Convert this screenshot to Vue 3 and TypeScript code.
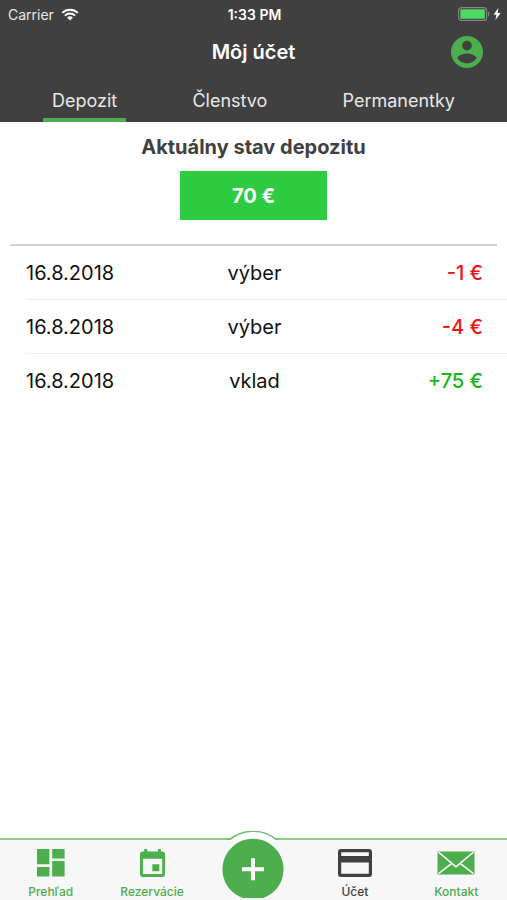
<script setup lang="ts">
import { ref } from 'vue'

interface Transaction {
  date: string
  kind: string
  amount: number
}

const tabs: string[] = ['Depozit', 'Členstvo', 'Permanentky']
const activeTab = ref<string>('Depozit')

const balance = 70
const transactions: Transaction[] = [
  { date: '16.8.2018', kind: 'výber', amount: -1 },
  { date: '16.8.2018', kind: 'výber', amount: -4 },
  { date: '16.8.2018', kind: 'vklad', amount: 75 },
]

const formatAmount = (n: number): string => `${n > 0 ? '+' : ''}${n} €`
</script>

<template>
  <div class="screen">
    <header class="top">
      <div class="status">
        <div class="carrier">
          <span>Carrier</span>
          <svg class="wifi" viewBox="0 0 18 13" aria-hidden="true">
            <path d="M1.200 4.900a11.200 11.200 0 0 1 15.600 0" />
            <path d="M3.900 7.600a7.300 7.300 0 0 1 10.200 0" />
            <path class="dot" d="M9 12.600 6.100 9.700a4.100 4.100 0 0 1 5.800 0z" />
          </svg>
        </div>
        <span class="clock">1:33 PM</span>
        <div class="power">
          <svg class="battery" viewBox="0 0 32 14" aria-hidden="true">
            <rect x="0.6" y="0.6" width="28" height="12.8" rx="3" fill="none" stroke="#858585" stroke-width="1.2" />
            <rect x="2.3" y="2.3" width="24.6" height="9.4" rx="1.2" fill="#4cd964" />
            <path d="M30 4.600c1.900.8 1.900 4 0 4.800z" fill="#858585" />
          </svg>
          <svg class="bolt" viewBox="0 0 8 12" aria-hidden="true">
            <path d="M5.400 0 .4 6.700h3L2.400 12l5.300-7H4.600z" fill="#fff" />
          </svg>
        </div>
      </div>

      <div class="title-bar">
        <h1>Môj účet</h1>
        <button class="profile" type="button" aria-label="Profil">
          <svg viewBox="2 2 20 20" aria-hidden="true">
            <path d="M12 2C6.480 2 2 6.480 2 12s4.480 10 10 10 10-4.480 10-10S17.520 2 12 2zm0 3c1.660 0 3 1.340 3 3s-1.340 3-3 3-3-1.340-3-3 1.340-3 3-3zm0 14.200c-2.500 0-4.710-1.280-6-3.220.03-1.990 4-3.080 6-3.080 1.990 0 5.970 1.090 6 3.080-1.290 1.940-3.500 3.220-6 3.220z" fill="#4cae4c" />
          </svg>
        </button>
      </div>

      <div class="tabs" role="tablist">
        <button
          v-for="tab in tabs"
          :key="tab"
          type="button"
          role="tab"
          class="tab"
          :class="{ active: tab === activeTab }"
          :aria-selected="tab === activeTab"
          @click="activeTab = tab"
        >{{ tab }}</button>
      </div>
    </header>

    <main>
      <section class="summary">
        <h2>Aktuálny stav depozitu</h2>
        <div class="balance">{{ balance }} €</div>
      </section>

      <table class="history">
        <tbody>
          <tr v-for="(t, i) in transactions" :key="i">
            <td class="date">{{ t.date }}</td>
            <td class="kind">{{ t.kind }}</td>
            <td class="amount" :class="t.amount < 0 ? 'minus' : 'plus'">{{ formatAmount(t.amount) }}</td>
          </tr>
        </tbody>
      </table>
    </main>

    <nav class="bottom">
      <a href="#prehlad" class="item">
        <svg viewBox="0 0 28 28" aria-hidden="true">
          <path d="M0 0h12.400v15.200H0zM15.200 0h12.400v9.400H15.200zM15.200 12h12.400v15.400H15.200zM0 18h12.400v9.400H0z" />
        </svg>
        <span>Prehľad</span>
      </a>
      <a href="#rezervacie" class="item">
        <svg viewBox="0 0 26 29" aria-hidden="true">
          <path fill-rule="evenodd" d="M4.400 0h3v2.600h11.200V0h3v2.600H23a3 3 0 0 1 3 3V26a3 3 0 0 1-3 3H3a3 3 0 0 1-3-3V5.600a3 3 0 0 1 3-3h1.400zM3 10v16h20V10zM12.800 15.800H20V23h-7.200z" />
        </svg>
        <span>Rezervácie</span>
      </a>
      <a href="#pridat" class="add" aria-label="Pridať">
        <svg viewBox="0 0 76 69" aria-hidden="true">
          <path d="M15 8.300A37 37 0 0 1 61 8.300V10H15z" fill="#fff" />
          <path d="M12 8.300h3A37 37 0 0 1 61 8.300h3" fill="none" stroke="#6fbe6f" stroke-width="1.500" />
          <path d="M27.700 67a30.500 30.500 0 1 1 20.600 0z" fill="#4cae4c" />
          <path d="M38 27.300v22M27 38.300h22" stroke="#fff" stroke-width="4" />
        </svg>
      </a>
      <a href="#ucet" class="item current" aria-current="page">
        <svg viewBox="0 0 34 28" aria-hidden="true">
          <path fill-rule="evenodd" d="M3 0h28a3 3 0 0 1 3 3v22a3 3 0 0 1-3 3H3a3 3 0 0 1-3-3V3a3 3 0 0 1 3-3zM3.200 3.200V7h27.600V3.200zM3.200 13.600v11.200h27.600V13.600z" />
        </svg>
        <span>Účet</span>
      </a>
      <a href="#kontakt" class="item">
        <svg viewBox="0 -2 38 28" aria-hidden="true">
          <path d="M.5.5h37v23H.5z" />
          <path d="M1.500 1.200 17 14.200l2 1.600 2-1.600L36.500 1.200M1.500 22.600 14.800 12.400M36.500 22.600 23.200 12.400" fill="none" stroke="#f7f7f7" stroke-width="1.700" />
        </svg>
        <span>Kontakt</span>
      </a>
    </nav>
  </div>
</template>

<style>
body {
  margin: 0;
  background: #fff;
}
</style>

<style scoped>
.screen {
  display: flex;
  flex-direction: column;
  min-height: 100vh;
  font-family: Inter, "Liberation Sans", sans-serif;
  color: #111;
}

button {
  margin: 0;
  border: 0;
  background: none;
  font: inherit;
  color: inherit;
  cursor: pointer;
}

.top {
  background: #404040;
  color: #fff;
}

.status {
  display: grid;
  grid-template-columns: 1fr auto 1fr;
  align-items: center;
  height: 28px;
  padding: 0 6px 0 8px;
  font-size: 14px;
}

.carrier {
  display: flex;
  align-items: center;
  gap: 7px;
  color: #e8e8e8;
}

.wifi {
  width: 18px;
  height: 13px;
  fill: none;
  stroke: #fff;
  stroke-width: 2;
}

.wifi .dot {
  fill: #fff;
  stroke: none;
}

.clock {
  font-weight: 600;
}

.power {
  display: flex;
  justify-content: flex-end;
  align-items: center;
  gap: 3px;
}

.battery {
  width: 32px;
  height: 14px;
}

.bolt {
  width: 8px;
  height: 12px;
}

.title-bar {
  display: grid;
  grid-template-columns: 1fr auto 1fr;
  align-items: center;
  height: 48px;
  padding: 0 24px;
}

h1 {
  grid-column: 2;
  margin: 0;
  font-size: 20px;
  line-height: 24px;
  font-weight: 600;
}

.profile {
  justify-self: end;
  padding: 0;
  width: 32px;
  height: 32px;
}

.profile svg {
  display: block;
  width: 32px;
  height: 32px;
}

.tabs {
  display: flex;
  justify-content: space-between;
  padding: 4px 43px 0;
}

.tab {
  padding: 8px 9px 4px;
  height: 42px;
  border-bottom: 4px solid transparent;
  font-size: 18px;
  line-height: 26px;
  color: #e8e8e8;
}

.tab.active {
  border-bottom-color: #4cae4c;
}

main {
  flex: 1;
}

.summary {
  display: flex;
  flex-direction: column;
  align-items: center;
  gap: 12px;
  margin: 0 10px;
  padding: 13px 0 24px;
  border-bottom: 2px solid #d2d2d2;
}

h2 {
  margin: 0;
  font-size: 20px;
  line-height: 24px;
  font-weight: 700;
  color: #404040;
}

.balance {
  box-sizing: border-box;
  min-width: 147px;
  padding: 13px 16px 12px;
  background: #2ecc40;
  color: #fff;
  font-size: 20px;
  line-height: 24px;
  font-weight: 700;
  text-align: center;
}

.history {
  width: calc(100% - 26px);
  margin-left: 26px;
  border-spacing: 0;
  table-layout: fixed;
}

.history td {
  height: 53px;
  padding: 0;
  font-size: 20px;
  line-height: 24px;
}

.history tr + tr td {
  border-top: 1px solid #ececec;
}

.date {
  width: 31%;
}

.kind {
  width: 33%;
  text-align: center;
}

.history .amount {
  padding-right: 24px;
  text-align: right;
  font-weight: 500;
}

.minus {
  color: #f01414;
}

.plus {
  color: #14b914;
}

.bottom {
  display: grid;
  grid-template-columns: repeat(5, 1fr);
  height: 60px;
  border-top: 2px solid #8fce8f;
  background: #f7f7f7;
}

.item {
  display: flex;
  flex-direction: column;
  align-items: center;
  gap: 7px;
  padding-top: 9px;
  color: #4cae4c;
  font-size: 12px;
  line-height: 16px;
  font-weight: 500;
  text-decoration: none;
}

.item svg {
  height: 28px;
  fill: currentColor;
}

.item.current {
  color: #404040;
}

.add {
  position: relative;
}

.add svg {
  position: absolute;
  bottom: 0;
  left: 50%;
  width: 76px;
  height: 69px;
  margin-left: -38px;
}
</style>
